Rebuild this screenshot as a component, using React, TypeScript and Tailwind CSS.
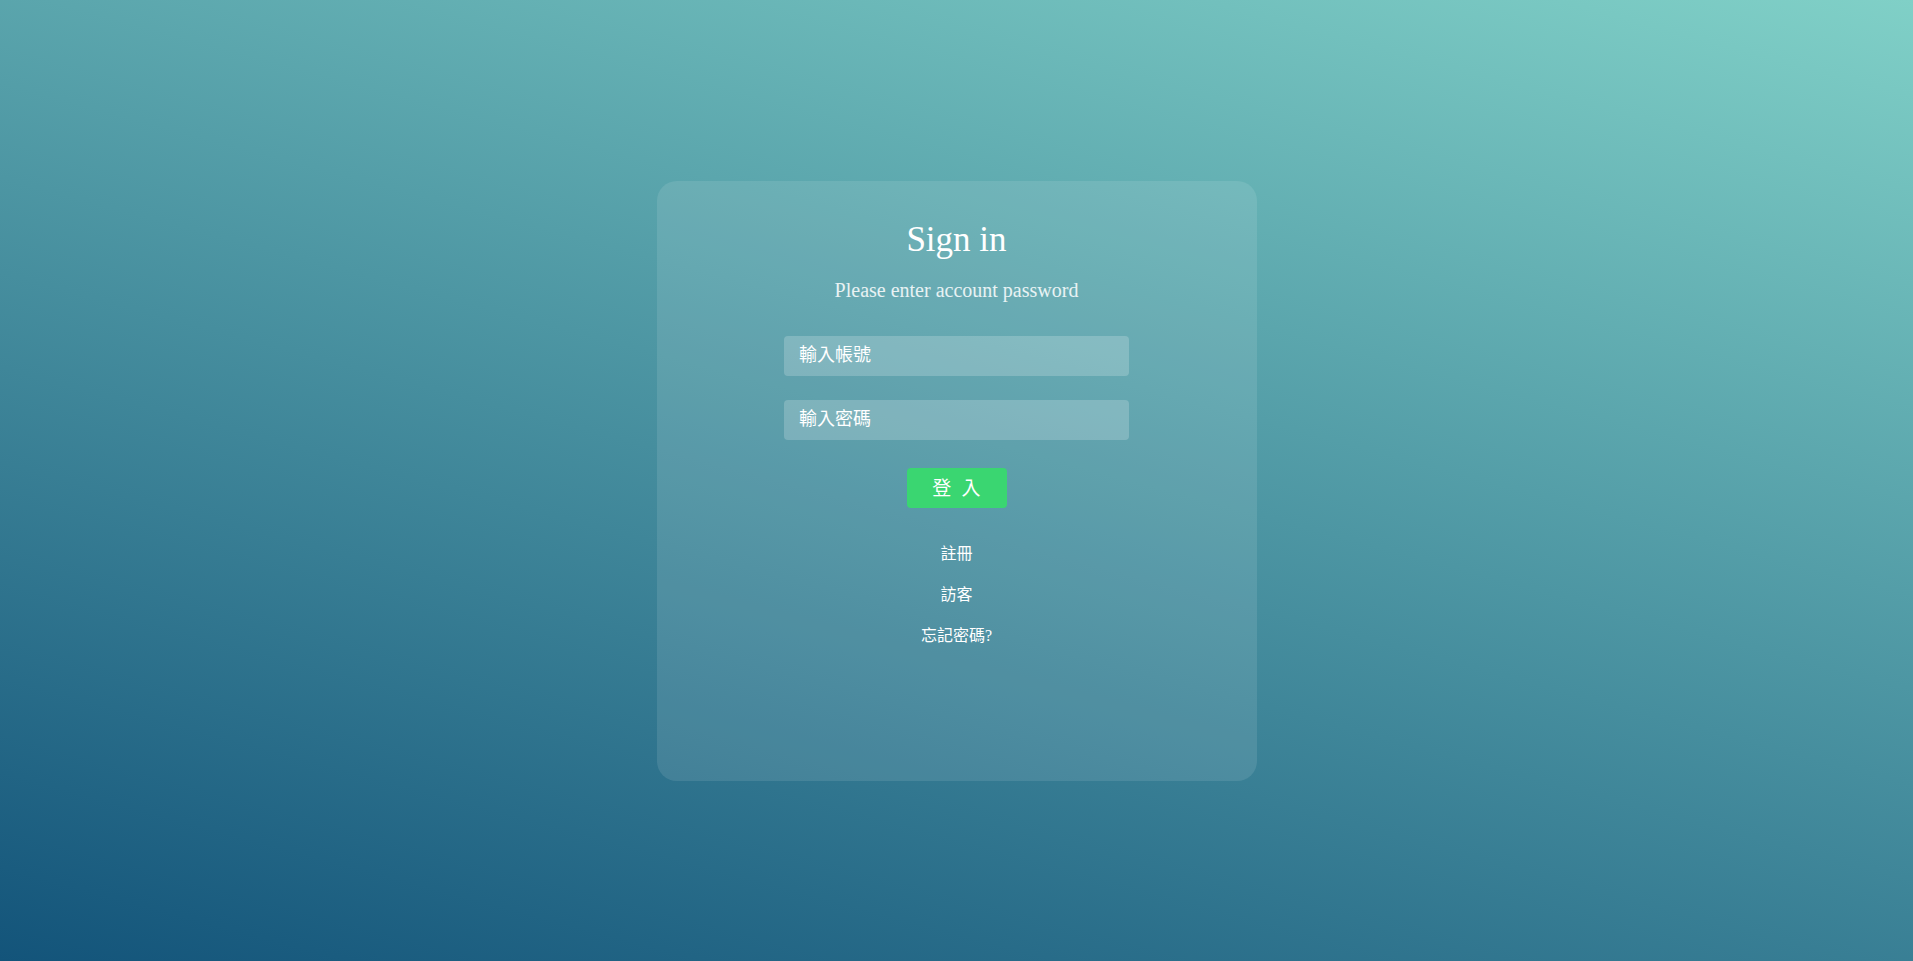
export default function App() {
  return (
    <div className="min-h-screen w-full flex items-center justify-center bg-[linear-gradient(15deg,#13547a_0%,#80d0c7_100%)]">
      <div className="w-[600px] h-[600px] rounded-[20px] bg-white/10 flex flex-col items-center pt-[39px]">
        <h1 className="text-[35px] leading-[40px] text-white font-['Liberation_Serif',serif]">
          Sign in
        </h1>
        <p className="mt-[18px] text-[20px] leading-[24px] text-white/85 font-['Liberation_Serif',serif]">
          Please enter account password
        </p>
        <form className="mt-[34px] flex flex-col items-center gap-[24px]">
          <input
            type="text"
            placeholder="輸入帳號"
            className="w-[345px] h-[40px] rounded-[4px] bg-white/20 px-[15px] pb-[5px] text-[18px] text-white placeholder:text-white outline-none font-['Noto_Sans_CJK_TC',sans-serif]"
          />
          <input
            type="password"
            placeholder="輸入密碼"
            className="w-[345px] h-[40px] rounded-[4px] bg-white/20 px-[15px] pb-[5px] text-[18px] text-white placeholder:text-white outline-none font-['Noto_Sans_CJK_TC',sans-serif]"
          />
        </form>
        <button className="mt-[28px] w-[100px] h-[40px] rounded-[4px] bg-[#3ad671] text-white text-[19px] [word-spacing:6px] font-['Noto_Sans_CJK_TC',sans-serif]">
          登 入
        </button>
        <div className="mt-[34px] flex flex-col items-center gap-[17px] text-[16px] leading-[24px] text-white font-['Liberation_Serif','Noto_Sans_CJK_TC',serif]">
          <a href="#">註冊</a>
          <a href="#">訪客</a>
          <a href="#">忘記密碼?</a>
        </div>
      </div>
    </div>
  );
}
